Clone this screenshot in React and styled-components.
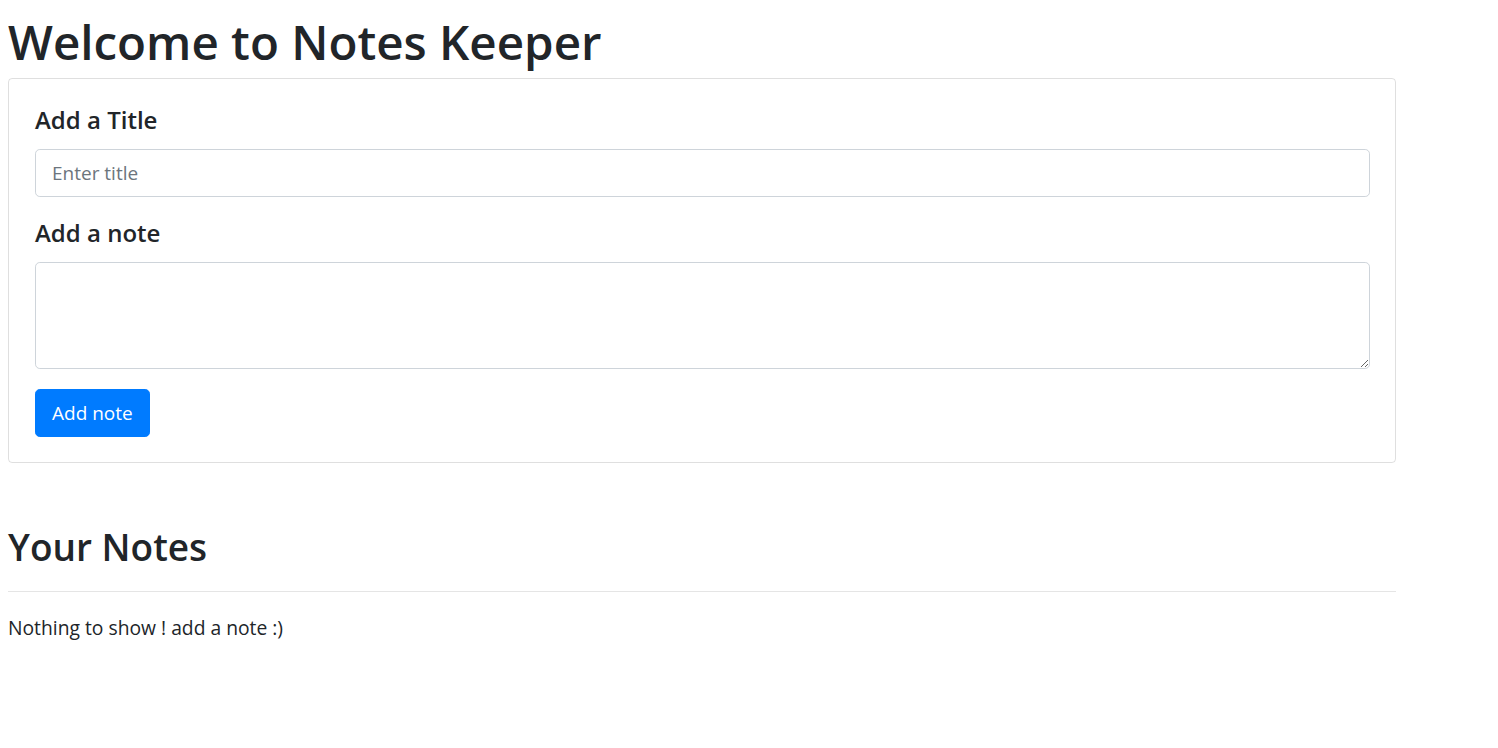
import React from 'react'
import styled, { createGlobalStyle } from 'styled-components'

const GlobalStyle = createGlobalStyle`
    body{
        margin: 8px;
        background: #fff;
        color: #212529;
        font-family: "Open Sans", "Noto Sans", sans-serif;
    }
    *{
        box-sizing: border-box;
    }
`;

export default function App() {
    return (
        <Page>
            <GlobalStyle />
            <Heading>Welcome to Notes Keeper</Heading>
            <Card>
                <Field>
                    <Label>Add a Title</Label>
                    <Input type="text" placeholder="Enter title" />
                </Field>
                <Field>
                    <Label>Add a note</Label>
                    <TextArea rows="3" />
                </Field>
                <Button>Add note</Button>
            </Card>
            <NotesTitle>Your Notes</NotesTitle>
            <Divider />
            <Empty>Nothing to show ! add a note :)</Empty>
        </Page>
    )
}

const Page = styled.div`
    width: 1388px;
`;

const Heading = styled.h1`
    margin: 0 0 3px;
    font-size: 47.5px;
    line-height: 67px;
    font-weight: 600;
    color: #212529;
`;

const Card = styled.div`
    display: flex;
    flex-direction: column;
    align-items: flex-start;
    padding: 27px 25px 25px 26px;
    border: 1px solid rgba(0, 0, 0, 0.125);
    border-radius: 4px;
`;

const Field = styled.div`
    width: 100%;
    margin-bottom: 22px;
    &:last-of-type{
        margin-bottom: 20px;
    }
`;

const Label = styled.h4`
    margin: 0 0 15px;
    font-size: 24px;
    line-height: 28px;
    font-weight: 600;
    color: #212529;
`;

const Input = styled.input`
    display: block;
    width: 100%;
    height: 48px;
    padding: 8px 16px;
    font-family: inherit;
    font-size: 19px;
    line-height: 30px;
    color: #495057;
    border: 1px solid #ced4da;
    border-radius: 4.8px;
    outline: none;
    &::placeholder{
        color: #6c757d;
    }
`;

const TextArea = styled.textarea`
    display: block;
    width: 100%;
    height: 107px;
    padding: 8px 16px;
    font-family: inherit;
    font-size: 19px;
    line-height: 30px;
    color: #495057;
    border: 1px solid #ced4da;
    border-radius: 4.8px;
    outline: none;
    resize: vertical;
`;

const Button = styled.button`
    height: 48px;
    padding: 0 16px;
    font-family: inherit;
    font-size: 19px;
    line-height: 30px;
    color: #fff;
    background-color: #007bff;
    border: 1px solid #007bff;
    border-radius: 4.8px;
    cursor: pointer;
`;

const NotesTitle = styled.h1`
    margin: 60px 0 0;
    font-size: 37px;
    line-height: 48px;
    font-weight: 600;
    color: #212529;
`;

const Divider = styled.hr`
    margin: 20px 0 0;
    border: 0;
    border-top: 1px solid rgba(0, 0, 0, 0.1);
`;

const Empty = styled.p`
    margin: 24px 0 0;
    font-size: 19.3px;
    line-height: 24px;
    color: #212529;
`;
